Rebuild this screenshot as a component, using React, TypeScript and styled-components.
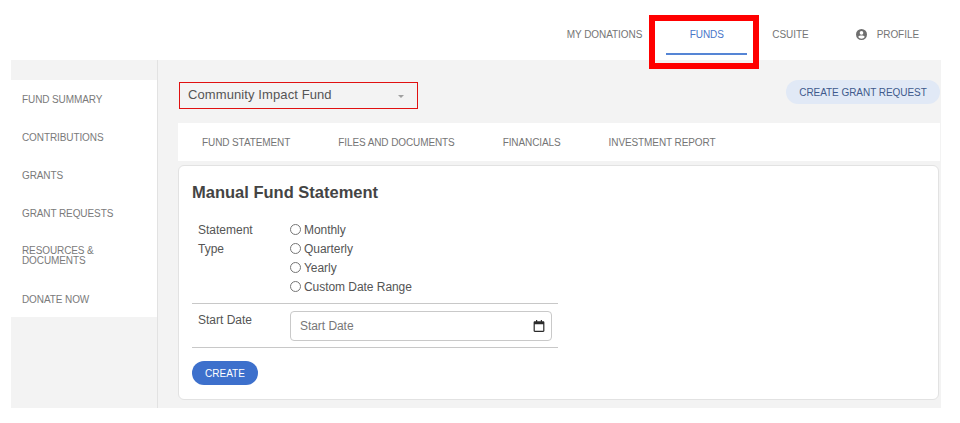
import React from 'react';
import styled, { createGlobalStyle } from 'styled-components';

const GlobalStyle = createGlobalStyle`
  html, body {
    margin: 0;
    padding: 0;
    background: #fff;
    font-family: "Liberation Sans", Arial, sans-serif;
  }
`;

const Page = styled.div`
  position: relative;
  width: 960px;
  height: 423px;
  overflow: hidden;
`;

const Header = styled.header`
  height: 60px;
  display: flex;
  justify-content: flex-end;
  padding-right: 41px;
`;

const NavItem = styled.a<{ $active?: boolean }>`
  display: flex;
  align-items: center;
  justify-content: center;
  gap: 10px;
  box-sizing: border-box;
  height: 42px;
  margin-top: 13px;
  padding-top: 2px;
  font-size: 10px;
  letter-spacing: -0.06px;
  color: ${(p) => (p.$active ? '#4a76c9' : '#757575')};
  border-bottom: 2px solid ${(p) => (p.$active ? '#5585d5' : 'transparent')};
  width: ${(p) => (p.$active ? '81px' : 'auto')};
  margin-left: ${(p) => (p.$active ? '24px' : '0')};
  margin-right: ${(p) => (p.$active ? '25px' : '0')};
`;

const ProfileItem = styled(NavItem)`
  margin-left: 47px;
`;

const RedFrame = styled.div`
  position: absolute;
  left: 649px;
  top: 15px;
  width: 98px;
  height: 42px;
  border: 6px solid #ff0000;
`;

const Body = styled.div`
  display: flex;
  width: 930px;
  height: 348px;
  margin-left: 11px;
  background: #f3f3f3;
`;

const Sidebar = styled.aside`
  width: 146px;
  flex: none;
  padding-top: 20px;
  border-right: 1px solid #e2e2e2;
`;

const SideList = styled.div`
  box-sizing: border-box;
  background: #fff;
  height: 237px;
  padding-top: 0.5px;
`;

const SideItem = styled.div<{ $tall?: boolean }>`
  display: flex;
  align-items: center;
  box-sizing: border-box;
  height: ${(p) => (p.$tall ? '48px' : '38px')};
  padding: 0 0 ${(p) => (p.$tall ? '2px' : '0')} 11px;
  font-size: 10px;
  line-height: 10px;
  letter-spacing: -0.1px;
  color: #7a7a7a;
`;

const Content = styled.main`
  flex: 1;
  min-width: 0;
  padding: 20px 1px 0 20px;
`;

const TopRow = styled.div`
  display: flex;
  justify-content: space-between;
  align-items: flex-start;
  height: 43px;
`;

const SelectBox = styled.div`
  display: flex;
  align-items: center;
  justify-content: space-between;
  box-sizing: border-box;
  width: 239px;
  height: 27px;
  margin: 2px 0 0 1px;
  padding: 0 13px 2px 8px;
  border: 1px solid #e01010;
  font-size: 13px;
  letter-spacing: 0.1px;
  color: #555;
`;

const Caret = styled.span`
  width: 0;
  height: 0;
  margin-top: 4px;
  border-left: 3px solid transparent;
  border-right: 3px solid transparent;
  border-top: 3px solid #a0a0a0;
`;

const GrantButton = styled.button`
  width: 154px;
  height: 24px;
  padding: 0;
  border: 0;
  border-radius: 12px;
  background: #e1e9f6;
  color: #3f5a8c;
  font: 10px "Liberation Sans", Arial, sans-serif;
  letter-spacing: -0.05px;
`;

const Tabs = styled.nav`
  display: flex;
  align-items: center;
  gap: 48px;
  height: 38px;
  padding-left: 24px;
  background: #fff;
`;

const Tab = styled.span`
  font-size: 10px;
  letter-spacing: -0.1px;
  color: #757575;
`;

const Card = styled.section`
  box-sizing: border-box;
  height: 235px;
  margin: 4px 1px 0 0;
  padding: 16px 13px 0;
  background: #fff;
  border: 1px solid #e2e2e2;
  border-radius: 6px;
`;

const Title = styled.h2`
  margin: 0 0 19px;
  font: 700 16.5px/20px "Liberation Sans", Arial, sans-serif;
  color: #444;
`;

const FormTable = styled.div`
  width: 366px;
`;

const FormRow = styled.div<{ $ruled?: boolean }>`
  display: grid;
  grid-template-columns: 92px 1fr;
  padding-left: 6px;
  border-bottom: ${(p) => (p.$ruled ? '1px solid #c8c8c8' : '0')};
`;

const RowLabel = styled.div`
  font: 12px/19px "Liberation Sans", Arial, sans-serif;
  color: #555;
`;

const RadioGroup = styled.div`
  display: flex;
  flex-direction: column;
  padding-bottom: 6px;
`;

const RadioLine = styled.label`
  display: flex;
  align-items: center;
  gap: 3px;
  height: 19px;
  font: 12px/19px "Liberation Sans", Arial, sans-serif;
  letter-spacing: -0.05px;
  color: #555;
`;

const RadioDot = styled.span`
  box-sizing: border-box;
  width: 11px;
  height: 11px;
  margin-top: -2px;
  border: 1px solid #767676;
  border-radius: 50%;
  background: #fff;
`;

const DateCell = styled.div`
  padding: 7px 6px 6px 0;
`;

const DateField = styled.div`
  box-sizing: border-box;
  display: flex;
  align-items: center;
  justify-content: space-between;
  height: 30px;
  padding: 0 6px 1px 9px;
  border: 1px solid #c9c9c9;
  border-radius: 4px;
  font: 12px "Liberation Sans", Arial, sans-serif;
  letter-spacing: -0.05px;
  color: #777;
`;

const DateLabel = styled(RowLabel)`
  padding-top: 7px;
`;

const CreateButton = styled.button`
  display: block;
  width: 66px;
  height: 24px;
  margin-top: 13px;
  padding: 0;
  border: 0;
  border-radius: 12px;
  background: #3d70cc;
  color: #fff;
  font: 10px "Liberation Sans", Arial, sans-serif;
`;

const ProfileIcon = () => (
  <svg width="11" height="11" viewBox="0 0 24 24" fill="#6f6f6f" aria-hidden="true">
    <path d="M12 0a12 12 0 1 0 0 24 12 12 0 0 0 0-24zm0 4.5a4 4 0 1 1 0 8 4 4 0 0 1 0-8zm0 16.5a9 9 0 0 1-7.2-3.6c.9-1.9 4.3-3 7.2-3s6.3 1.1 7.2 3A9 9 0 0 1 12 21z" />
  </svg>
);

const CalendarIcon = () => (
  <svg width="12" height="12" viewBox="0 0 12 12" aria-hidden="true">
    <path
      fill="#2b2b2b"
      d="M3 0h1.2v1.2h3.6V0H9v1.2h1.2c.7 0 1.2.5 1.2 1.2v8.4c0 .7-.5 1.2-1.2 1.2H1.8c-.7 0-1.2-.5-1.2-1.2V2.4c0-.7.5-1.2 1.2-1.2H3V0zM1.8 4.2v6.6h8.4V4.2H1.8z"
    />
  </svg>
);

const sideItems = ['FUND SUMMARY', 'CONTRIBUTIONS', 'GRANTS', 'GRANT REQUESTS'];
const tabs = ['FUND STATEMENT', 'FILES AND DOCUMENTS', 'FINANCIALS', 'INVESTMENT REPORT'];
const statementTypes = ['Monthly', 'Quarterly', 'Yearly', 'Custom Date Range'];

const App: React.FC = () => {
  return (
    <Page>
      <GlobalStyle />
      <Header>
        <NavItem>MY DONATIONS</NavItem>
        <NavItem $active>FUNDS</NavItem>
        <NavItem>CSUITE</NavItem>
        <ProfileItem>
          <ProfileIcon />
          PROFILE
        </ProfileItem>
      </Header>
      <Body>
        <Sidebar>
          <SideList>
            {sideItems.map((item) => (
              <SideItem key={item}>{item}</SideItem>
            ))}
            <SideItem $tall>
              RESOURCES &
              <br />
              DOCUMENTS
            </SideItem>
            <SideItem>DONATE NOW</SideItem>
          </SideList>
        </Sidebar>
        <Content>
          <TopRow>
            <SelectBox>
              Community Impact Fund
              <Caret />
            </SelectBox>
            <GrantButton>CREATE GRANT REQUEST</GrantButton>
          </TopRow>
          <Tabs>
            {tabs.map((tab) => (
              <Tab key={tab}>{tab}</Tab>
            ))}
          </Tabs>
          <Card>
            <Title>Manual Fund Statement</Title>
            <FormTable>
              <FormRow $ruled>
                <RowLabel>
                  Statement
                  <br />
                  Type
                </RowLabel>
                <RadioGroup>
                  {statementTypes.map((type) => (
                    <RadioLine key={type}>
                      <RadioDot />
                      {type}
                    </RadioLine>
                  ))}
                </RadioGroup>
              </FormRow>
              <FormRow $ruled>
                <DateLabel>Start Date</DateLabel>
                <DateCell>
                  <DateField>
                    Start Date
                    <CalendarIcon />
                  </DateField>
                </DateCell>
              </FormRow>
            </FormTable>
            <CreateButton>CREATE</CreateButton>
          </Card>
        </Content>
      </Body>
      <RedFrame />
    </Page>
  );
};

export default App;
